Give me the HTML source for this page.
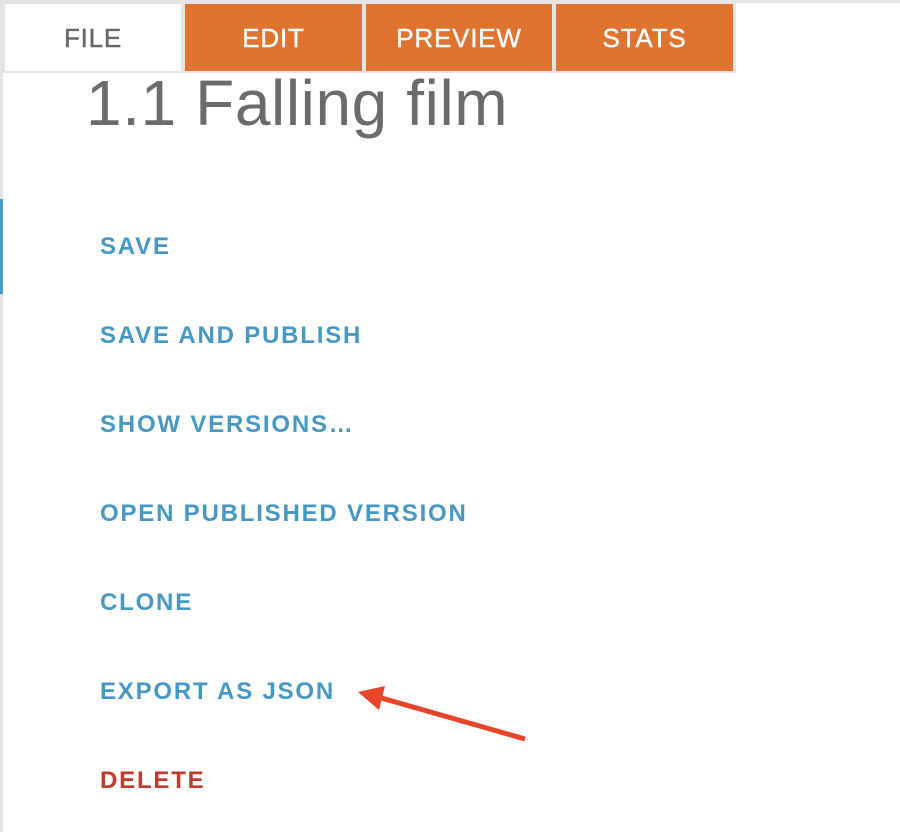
<!DOCTYPE html>
<html><head><style>
body{margin:0;width:900px;height:832px;background:#fff;position:relative;overflow:hidden;font-family:"Liberation Sans",sans-serif}
.lb{position:absolute;left:0;top:0;width:3px;height:832px;background:#e4e4e4}
.tb{position:absolute;left:0;top:0;width:900px;height:3px;background:#e4e4e4}
.tabs{position:absolute;left:3px;top:3px;width:733px;height:70px;background:#e4e4e4}
.tab{position:absolute;top:1px;height:67px;line-height:68px;text-align:center;font-size:26px;color:#fff;background:#de7430;letter-spacing:.8px;-webkit-text-stroke:0.4px currentColor}
.blue{position:absolute;left:0;top:199px;width:3px;height:95px;background:#4a9ac3}
h1{position:absolute;left:86px;top:66px;margin:0;font-weight:normal;font-size:64px;color:#6b6b6b;letter-spacing:.6px}
.it{position:absolute;left:100px;font-size:24px;font-weight:bold;letter-spacing:1.8px;color:#4697c2;line-height:30px}
</style></head><body>
<div class="tb"></div><div class="lb"></div>
<div class="tabs">
<div class="tab" style="left:2px;width:176px;background:#fff;color:#666">FILE</div>
<div class="tab" style="left:182px;width:177px">EDIT</div>
<div class="tab" style="left:363px;width:186px">PREVIEW</div>
<div class="tab" style="left:553px;width:177px">STATS</div>
</div>
<div class="blue"></div>
<h1>1.1 Falling film</h1>
<div class="it" style="top:232px">SAVE</div>
<div class="it" style="top:321px">SAVE AND PUBLISH</div>
<div class="it" style="top:410px">SHOW VERSIONS…</div>
<div class="it" style="top:499px">OPEN PUBLISHED VERSION</div>
<div class="it" style="top:588px">CLONE</div>
<div class="it" style="top:677px">EXPORT AS JSON</div>
<div class="it" style="top:766px;color:#c0392f">DELETE</div>
<svg style="position:absolute;left:0;top:0" width="900" height="832">
<line x1="525" y1="739" x2="378" y2="697" stroke="#e8442a" stroke-width="5"/>
<polygon points="358,692 385,686 379,710" fill="#e8442a"/>
</svg>
</body></html>
